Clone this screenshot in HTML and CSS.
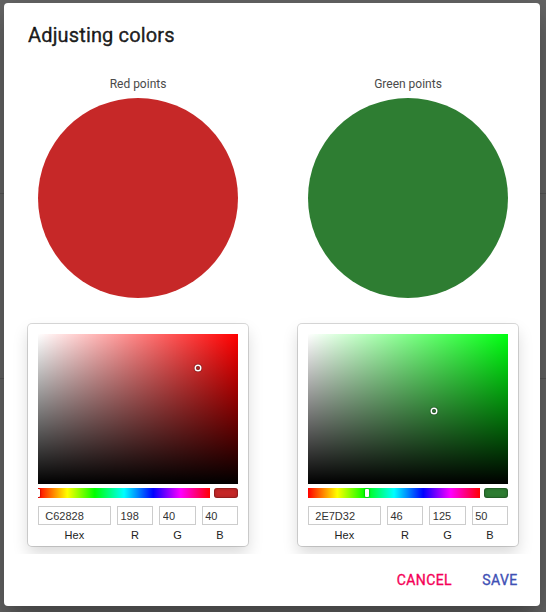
FILE: index.html
```html
<!DOCTYPE html>
<html>
<head>
<meta charset="utf-8">
<link rel="stylesheet" href="styles.css">
</head>
<body>
<div class="dialog">
  <h2 class="title">Adjusting colors</h2>
  <div class="content">
    <div class="column">
      <div class="label">Red points</div>
      <div class="circle circle-red"></div>
      <div class="picker">
        <div class="sat sat-red">
          <div class="sat-white"></div>
          <div class="sat-black"></div>
          <div class="sat-pointer" style="left:79.8%;top:22.4%"></div>
        </div>
        <div class="controls">
          <div class="sliders">
            <div class="hue"><div class="hue-pointer" style="left:0%"></div></div>
          </div>
          <div class="active active-red"></div>
        </div>
        <div class="fields">
          <div class="field field-double"><input class="field-input" value="C62828" readonly spellcheck="false" autocomplete="off"><span class="field-label">hex</span></div>
          <div class="field"><input class="field-input" value="198" readonly spellcheck="false" autocomplete="off"><span class="field-label">r</span></div>
          <div class="field"><input class="field-input" value="40" readonly spellcheck="false" autocomplete="off"><span class="field-label">g</span></div>
          <div class="field"><input class="field-input" value="40" readonly spellcheck="false" autocomplete="off"><span class="field-label">b</span></div>
        </div>
      </div>
    </div>
    <div class="column">
      <div class="label">Green points</div>
      <div class="circle circle-green"></div>
      <div class="picker">
        <div class="sat sat-green">
          <div class="sat-white"></div>
          <div class="sat-black"></div>
          <div class="sat-pointer" style="left:63.2%;top:51%"></div>
        </div>
        <div class="controls">
          <div class="sliders">
            <div class="hue"><div class="hue-pointer" style="left:34.18%"></div></div>
          </div>
          <div class="active active-green"></div>
        </div>
        <div class="fields">
          <div class="field field-double"><input class="field-input" value="2E7D32" readonly spellcheck="false" autocomplete="off"><span class="field-label">hex</span></div>
          <div class="field"><input class="field-input" value="46" readonly spellcheck="false" autocomplete="off"><span class="field-label">r</span></div>
          <div class="field"><input class="field-input" value="125" readonly spellcheck="false" autocomplete="off"><span class="field-label">g</span></div>
          <div class="field"><input class="field-input" value="50" readonly spellcheck="false" autocomplete="off"><span class="field-label">b</span></div>
        </div>
      </div>
    </div>
  </div>
  <div class="actions">
    <button class="btn btn-secondary">Cancel</button>
    <button class="btn btn-primary">Save</button>
  </div>
</div>
</body>
</html>
```
FILE: styles.css
```css
html, body {
  margin: 0;
  padding: 0;
}
body {
  width: 546px;
  height: 612px;
  overflow: hidden;
  font-family: Roboto, "Noto Sans", sans-serif;
  background:
    linear-gradient(to bottom,
      transparent 0, transparent 193px, #575757 193px, #575757 194px, transparent 194px,
      transparent 378px, #575757 378px, #575757 379px, transparent 379px),
    #666666;
}
.dialog {
  margin: 3px 0 0 4px;
  width: 536px;
  height: 603px;
  background: #fff;
  border-radius: 4px;
  box-shadow: 0 11px 15px -7px rgba(0,0,0,.2), 0 24px 38px 3px rgba(0,0,0,.14), 0 9px 46px 8px rgba(0,0,0,.12);
  display: flex;
  flex-direction: column;
  box-sizing: border-box;
}
.title {
  margin: 0;
  padding: 16px 24px;
  font-family: Roboto, sans-serif;
  font-size: 20px;
  font-weight: 400;
  -webkit-text-stroke: 0.4px rgba(0,0,0,.87);
  line-height: 32px;
  letter-spacing: 0.0075em;
  color: rgba(0,0,0,.87);
  flex-shrink: 0;
}
.content {
  flex: 1;
  padding: 8px 24px;
  overflow-y: auto;
  display: flex;
  gap: 50px;
  min-height: 0;
}
.column {
  width: 220px;
  display: flex;
  flex-direction: column;
  align-items: center;
  flex-shrink: 0;
}
.label {
  padding-top: 1px;
  font-size: 12px;
  line-height: 16px;
  color: #4a4a4a;
  flex-shrink: 0;
}
.circle {
  margin-top: 6px;
  width: 200px;
  height: 200px;
  border-radius: 50%;
  flex-shrink: 0;
}
.circle-red { background: #c62828; }
.circle-green { background: #2e7d32; }
.picker {
  margin-top: 26px;
  width: 200px;
  padding: 10px 10px 0;
  background: #fff;
  border-radius: 4px;
  box-shadow: 0 0 0 1px rgba(0,0,0,.15), 0 8px 16px rgba(0,0,0,.15);
  flex-shrink: 0;
}
.sat {
  position: relative;
  width: 200px;
  height: 150px;
  overflow: hidden;
}
.sat-red { background: #ff0000; }
.sat-green { background: #00ff11; }
.sat-white {
  position: absolute;
  inset: 0;
  background: linear-gradient(to right, #fff, rgba(255,255,255,0));
}
.sat-black {
  position: absolute;
  inset: 0;
  background: linear-gradient(to top, #000, rgba(0,0,0,0));
}
.sat-pointer {
  position: absolute;
  width: 4px;
  height: 4px;
  border-radius: 50%;
  transform: translate(-2px, -2px);
  box-shadow: 0 0 0 1.5px #fff, inset 0 0 1px 1px rgba(0,0,0,.3), 0 0 1px 2px rgba(0,0,0,.4);
}
.controls {
  display: flex;
}
.sliders {
  flex: 1;
  padding: 4px 0;
}
.hue {
  position: relative;
  height: 10px;
  overflow: hidden;
  background: linear-gradient(to right, #f00 0%, #ff0 17%, #0f0 33%, #0ff 50%, #00f 67%, #f0f 83%, #f00 100%);
}
.hue-pointer {
  position: absolute;
  top: 1px;
  width: 4px;
  height: 8px;
  border-radius: 1px;
  background: #fff;
  box-shadow: 0 0 2px rgba(0,0,0,.6);
  transform: translateX(-2px);
}
.active {
  width: 24px;
  height: 10px;
  margin-top: 4px;
  margin-left: 4px;
  border-radius: 3px;
  box-shadow: inset 0 0 0 1px rgba(0,0,0,.15), inset 0 0 4px rgba(0,0,0,.25);
}
.active-red { background: #c62828; }
.active-green { background: #2e7d32; }
.fields {
  display: flex;
  padding-top: 4px;
}
.field {
  flex: 1 1 0;
  padding-left: 6px;
  min-width: 0;
}
.field-double {
  flex: 2 1 0;
  padding-left: 0;
}
.field-input {
  display: block;
  width: 100%;
  box-sizing: border-box;
  padding: 4px 10% 3px;
  margin: 0;
  border: none;
  outline: none;
  box-shadow: inset 0 0 0 1px #ccc;
  font-family: "Liberation Sans", Arial, sans-serif;
  font-size: 11px;
  line-height: 12px;
  height: 19px;
  color: #333;
  -webkit-text-fill-color: #333;
  background: #fff;
}
.field-label {
  display: block;
  text-align: center;
  font-family: "Liberation Sans", Arial, sans-serif;
  font-size: 11px;
  line-height: 13px;
  color: #222;
  padding-top: 4px;
  padding-bottom: 4px;
  text-transform: capitalize;
}
.actions {
  padding: 8px;
  display: flex;
  justify-content: flex-end;
  gap: 8px;
  flex-shrink: 0;
}
.btn {
  min-width: 64px;
  padding: 6px 8px;
  border: none;
  background: transparent;
  font-family: Roboto, sans-serif;
  font-size: 14px;
  font-weight: 400;
  line-height: 24px;
  letter-spacing: 0.02857em;
  text-transform: uppercase;
  border-radius: 4px;
  cursor: pointer;
}
.btn-secondary { color: #f50057; -webkit-text-stroke: 0.35px #f50057; }
.btn-primary { color: #3f51b5; -webkit-text-stroke: 0.35px #3f51b5; }
```
